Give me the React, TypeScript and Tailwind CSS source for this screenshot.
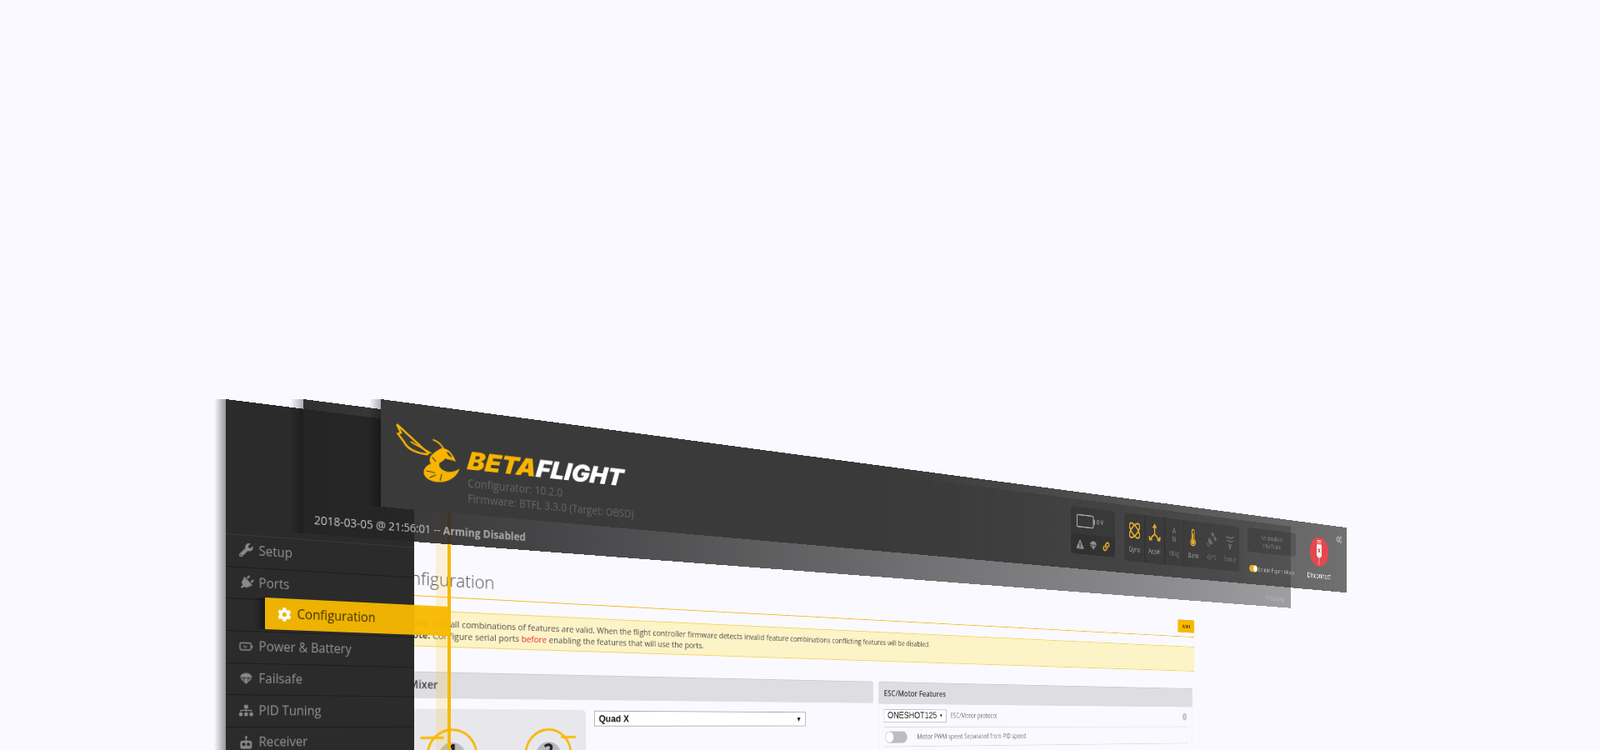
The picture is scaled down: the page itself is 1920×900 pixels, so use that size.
import React from "react";
import { FaWrench, FaPlug, FaCog, FaCogs, FaSitemap, FaExclamationTriangle, FaLink } from "react-icons/fa";

// -------------------------------------------------------
// ICONS
// -------------------------------------------------------

const BatteryIcon = ({ className }: { className?: string }) => (
  <svg viewBox="0 0 24 18" fill="none" stroke="currentColor" strokeWidth="2" className={className}>
    <rect x="1.5" y="3" width="19" height="12" rx="2.5" />
    <path d="M22.5 7v4" />
    <path d="M7 9.5l3-2v2h3.5l-3 2v-2z" strokeWidth="1" />
  </svg>
);

const ParachuteIcon = ({ className }: { className?: string }) => (
  <svg viewBox="0 0 24 24" fill="currentColor" className={className}>
    <path d="M1.5 10.5C2.5 5.5 7 3 12 3s9.5 2.5 10.5 7.5z" />
    <path d="M2 12l10 10L22 12h-4.500l-4 7 2-7h-7l2 7-4-7z" />
  </svg>
);

const ReceiverIcon = ({ className }: { className?: string }) => (
  <svg viewBox="0 0 24 24" fill="currentColor" className={className}>
    <rect x="11" y="2" width="2" height="8" />
    <circle cx="12" cy="3" r="2" />
    <path fillRule="evenodd" d="M6 9h12a4 4 0 0 1 4 4v6a4 4 0 0 1-4 4H6a4 4 0 0 1-4-4v-6a4 4 0 0 1 4-4zm2 3.500a3 3 0 1 0 0 6 3 3 0 0 0 0-6zm8 0a3 3 0 1 0 0 6 3 3 0 0 0 0-6z" />
  </svg>
);

const BeeLogo = () => (
  <svg viewBox="0 0 285 240" className="h-[80px] w-[95px] overflow-visible">
    {/* drawn as seen in the picture, so the layer's slope is taken back out first */}
    <g transform="matrix(1 -0.135 0 1 0 0)" fill="none" stroke="#f8b400" strokeLinejoin="miter">
      <path d="M138 124L19 14l15 31-11 3 22 30c14 28 50 44 90 48" strokeWidth="7" />
      <path d="M70 78l76 44" strokeWidth="5" />
      <path d="M152 72c18 6 32 18 42 36" strokeWidth="5" />
      <g fill="#f8b400" stroke="none">
        <path d="M186 104c26 0 44 24 54 52-14-8-28-6-40-14-6 10-26 20-44 22-16 0-22-22-8-36 10-10 24-18 38-24z" />
        <path d="M178 158c-34-6-60 10-60 34 2 24 40 42 78 36 28-4 50-22 58-46-18 10-40 16-58 6-14-8-24-18-18-30z" />
      </g>
      <path d="M205 118c8 2 16 12 20 22-10-4-18-10-20-22z" fill="#3a3a3a" stroke="none" />
      <path d="M128 186l32 8M140 212l24-10M180 224l6-24M150 136l14 18" stroke="#3a3a3a" strokeWidth="3.500" />
    </g>
  </svg>
);

const GyroIcon = () => (
  <svg viewBox="0 0 30 30" fill="none" stroke="currentColor" strokeWidth="2.600" className="h-[32px] w-[32px]">
    <ellipse cx="15" cy="15" rx="7" ry="15" transform="rotate(45 15 15)" />
    <ellipse cx="15" cy="15" rx="7" ry="15" transform="rotate(-45 15 15)" />
  </svg>
);

const AccelIcon = () => (
  <svg viewBox="0 0 30 30" fill="none" stroke="currentColor" strokeWidth="2.800" className="h-[32px] w-[32px]">
    <path d="M15 17V4M15 17L5 25M15 17l10 8" />
    <path d="M11 7l4-5 4 5M2 21l1 6 6-1M28 21l-1 6-6-1" />
  </svg>
);

const MagIcon = () => (
  <div className="flex h-[32px] w-[32px] flex-col items-center text-[14px] font-bold leading-[15px]">
    <span>A</span>
    <span>N</span>
  </div>
);

const BaroIcon = () => (
  <svg viewBox="0 0 30 30" fill="none" stroke="currentColor" strokeWidth="2" className="h-[32px] w-[32px]">
    <path d="M12 18V5a3 3 0 0 1 6 0v13a6 6 0 1 1-6 0z" />
    <circle cx="15" cy="23" r="3.500" fill="currentColor" />
    <path d="M15 23V9" />
  </svg>
);

const GpsIcon = () => (
  <svg viewBox="0 0 30 30" fill="currentColor" className="h-[32px] w-[32px]">
    <path d="M17 2l5 5-4 4-5-5zM24 9l4 5-4 4-5-5zM9 12l9 9-3 3c-4 1-8-1-9-5-1-3 1-5 3-7z" />
    <path d="M3 21c0 3 3 6 6 6" fill="none" stroke="currentColor" strokeWidth="2" />
  </svg>
);

const SonarIcon = () => (
  <svg viewBox="0 0 30 30" fill="none" stroke="currentColor" strokeWidth="2.400" className="h-[32px] w-[32px]">
    <path d="M5 6c3 4 17 4 20 0M7 13c3 3 13 3 16 0M10 20c2 2 8 2 10 0" />
    <circle cx="15" cy="25" r="1.800" fill="currentColor" />
  </svg>
);

const UsbIcon = () => (
  <svg viewBox="0 0 30 58" className="h-[52px] w-[28px]">
    <path d="M9 4h12v9H9z" fill="none" stroke="#fff" strokeWidth="2" />
    <path d="M12 7h2v2h-2zM16 7h2v2h-2z" fill="#fff" />
    <path d="M7 13h16v23c0 3-4 5-8 5s-8-2-8-5z" fill="#fff" />
    <path d="M11 21l8 9M19 21l-8 9" stroke="#e5474e" strokeWidth="2.400" />
    <path d="M15 41v16" stroke="#fff" strokeWidth="2.500" />
  </svg>
);

// -------------------------------------------------------
// DATA
// -------------------------------------------------------

const NAV_ITEMS = [
  { label: "Setup", icon: <FaWrench className="h-[17px] w-[17px]" /> },
  { label: "Ports", icon: <FaPlug className="h-[18px] w-[18px] rotate-45" /> },
  { label: "", icon: null },
  { label: "Power & Battery", icon: <BatteryIcon className="h-[16px] w-[17px]" /> },
  { label: "Failsafe", icon: <ParachuteIcon className="h-[17px] w-[17px]" /> },
  { label: "PID Tuning", icon: <FaSitemap className="h-[17px] w-[17px]" /> },
  { label: "Receiver", icon: <ReceiverIcon className="h-[18px] w-[17px]" /> },
];

const SENSORS = [
  { label: "Gyro", icon: <GyroIcon />, on: true },
  { label: "Accel", icon: <AccelIcon />, on: true },
  { label: "Mag", icon: <MagIcon />, on: false },
  { label: "Baro", icon: <BaroIcon />, on: true },
  { label: "GPS", icon: <GpsIcon />, on: false },
  { label: "Sonar", icon: <SonarIcon />, on: false },
];

// -------------------------------------------------------
// LAYERS
// -------------------------------------------------------

function ContentLayer() {
  return (
    <div className="absolute left-[420px] top-[161px] h-[600px] w-[1538px] origin-top-left text-[#444] [transform:matrix3d(1,0.07713,0,0.00033681,0,1,0,0,0,0,1,0,0,0,0,1)]">
      {/* title row */}
      <div className="flex h-[71px] items-end justify-between border-b border-[#f5b81c] pb-[5px] pl-[47px]">
        <h1 className="text-[22.500px] font-light leading-[32px] text-[#555]">Configuration</h1>
        <div className="mb-[2px] flex h-[23px] w-[45px] items-center justify-center rounded-[2px] bg-[#f8b800] text-[9px] font-bold text-[#6b4b00]">
          WIKI
        </div>
      </div>

      {/* note */}
      <div className="mt-[17px] h-[45px] border-y border-[#f3d35c] bg-[#fcf3c6] pl-[68px] pt-[6.500px] text-[11.500px] leading-[15.500px] text-[#4d4d4d]">
        <p>
          <b className="text-[#a33]">Note:</b> Not all combinations of features are valid. When the flight controller firmware detects invalid feature combinations conflicting features will be disabled.
        </p>
        <p>
          <b>Note:</b> Configure serial ports <span className="text-[#e8262a]">before</span> enabling the features that will use the ports.
        </p>
      </div>

      {/* panels */}
      <div className="mt-[31px] flex gap-[10px] pl-[58px] pr-[5px]">
        <div className="w-[738px] rounded-[4px]">
          <div className="flex h-[33px] items-center rounded-t-[4px] border-t border-[#ccc] bg-[#dedee2] pb-[2px] pl-[14px] text-[13.500px] font-semibold text-[#444]">
            Mixer
          </div>
          <div className="flex gap-[12px] pl-[14px] pt-[13px]">
            <div className="h-[300px] w-[241px] rounded-[6px] bg-[#e8e8ec]">
              <svg viewBox="0 0 241 300" fill="none" stroke="#f8b800" strokeWidth="3" className="h-[300px] w-[241px]">
                <path d="M15 36h30M205 36h21" />
                <circle cx="56" cy="58" r="32" />
                <circle cx="187" cy="58" r="32" />
                <circle cx="56" cy="60" r="18" fill="#b9b9bb" stroke="none" />
                <circle cx="187" cy="60" r="18" fill="#b9b9bb" stroke="none" />
                <text x="56" y="63" textAnchor="middle" fontSize="26" fontWeight="700" fill="#222" stroke="none">1</text>
                <text x="187" y="63" textAnchor="middle" fontSize="26" fontWeight="700" fill="#222" stroke="none">2</text>
              </svg>
            </div>
            <div className="mt-[1px] flex h-[21px] w-[345px] items-center justify-between border border-[#a9a9a9] bg-white pl-[6px] pr-[6px] font-['Liberation_Sans',sans-serif] text-[13px] font-bold text-[#111]">
              <span>Quad X</span>
              <span className="text-[10px]">▼</span>
            </div>
          </div>
        </div>

        <div className="w-[727px] rounded-[4px] border-x border-[#e6e6ea]">
          <div className="flex h-[34px] items-center rounded-t-[4px] border-t border-[#ccc] bg-[#dedee2] pl-[10px] text-[13px] font-semibold text-[#444]">
            ESC/Motor Features
          </div>
          <div className="mx-[10px] flex h-[36px] items-center border-b border-[#ddd] text-[11px] text-[#777]">
            <div className="flex h-[20px] w-[126px] items-center justify-between border border-[#bbb] bg-white pl-[6px] pr-[6px] font-['Liberation_Sans',sans-serif] text-[15px] text-[#222]">
              <span>ONESHOT125</span>
              <span className="text-[8px]">▼</span>
            </div>
            <span className="ml-[8px]">ESC/Motor protocol</span>
            <span className="ml-auto mr-[5px] flex h-[13px] w-[11px] items-center justify-center rounded-full bg-[#c4c4c4] text-[9px] font-bold text-white">?</span>
          </div>
          <div className="mx-[10px] flex h-[30px] items-center border-b border-[#ddd] text-[11px] text-[#777]">
            <div className="ml-[2px] flex h-[18px] w-[44px] items-center rounded-full bg-[#bdbdbd] pl-[1px]">
              <div className="h-[16px] w-[16px] rounded-full bg-white" />
            </div>
            <span className="ml-[20px]">Motor PWM speed Separated from PID speed</span>
          </div>
        </div>
      </div>
    </div>
  );
}

function SidebarLayer() {
  return (
    <div className="absolute left-[271px] top-0 h-[480px] w-[244px] origin-top-left bg-[#2b2b2c] pt-[161px] [transform:matrix3d(1,0.12508,0,0.00032072,0,1,0,0,0,0,1,0,0,0,0,1)]">
      <div className="border-t border-[#3a3a3a]">
        {NAV_ITEMS.map((item, i) => (
          <div key={i} className="flex h-[38.700px] items-center border-b border-[#1c1c1d] pb-[2px] pl-[16px] text-[15.600px] text-[#939393]">
            <span className="flex w-[24px] shrink-0 text-[#8a8a8a]">{item.icon}</span>
            <span>{item.label}</span>
          </div>
        ))}
      </div>
    </div>
  );
}

function StatusLayer() {
  return (
    <div className="absolute left-[364px] top-0 flex h-[161px] w-[1948px] origin-top-left items-end justify-between bg-linear-to-r from-[#242425f0] via-[#2a2a2ba8] to-[#2a2a2b70] pb-[7px] pl-[13px] pr-[22px] text-[14px] [transform:matrix3d(1,0.12893,0,0.00033058,0,1,0,0,0,0,1,0,0,0,0,1)]">
      <span className="text-[#c8c8c8]">
        2018-03-05 @ 21:56:01 -- <b className="text-[#a9a9a9]">Arming Disabled</b>
      </span>
      <span className="text-[13px] text-white/30">Show Log</span>
    </div>
  );
}

function HeaderLayer() {
  return (
    <div className="absolute left-[457px] top-0 flex h-[129px] w-[1917px] origin-top-left items-start bg-linear-to-r from-[#3a3a3a] via-[#3a3a3a] via-40% to-[#3a3a3ab8] pl-[13px] [transform:matrix3d(1,0.13302,0,0.00034106,0,1,0,0,0,0,1,0,0,0,0,1)]">
      <div className="mt-[24px] w-[95px] shrink-0">
        <BeeLogo />
      </div>

      <div className="w-[1046px] shrink-0 pt-[46px]">
        <div className="origin-left font-['Inter',sans-serif] text-[31px] font-black italic leading-[31px] [transform:scaleX(1.1)_skewX(-6deg)]">
          <span className="text-[#f8b400]">BETA</span>
          <span className="text-white">FLIGHT</span>
        </div>
        <div className="mt-[3px] text-[13.800px] leading-[19px] text-[#666]">
          <p>Configurator: 10.2.0</p>
          <p>Firmware: BTFL 3.3.0 (Target: OBSD)</p>
        </div>
      </div>

      {/* battery + status */}
      <div className="mt-[25px] h-[79px] w-[105px] shrink-0 overflow-hidden rounded-[5px] bg-black/15">
        <div className="flex h-[45px] items-center gap-[4px] pl-[13px] text-[11px] font-semibold text-[#a8a8a8]">
          <svg viewBox="0 0 44 24" fill="none" stroke="currentColor" strokeWidth="2" className="h-[24px] w-[44px]">
            <rect x="1" y="2" width="39" height="20" rx="3" />
            <path d="M42.500 8v8" strokeWidth="2.500" />
          </svg>
          <span>0 V</span>
        </div>
        <div className="flex h-[34px] items-center justify-between bg-black/10 px-[13px] text-[#8f8f8f]">
          <FaExclamationTriangle className="h-[17px] w-[17px]" />
          <ParachuteIcon className="h-[18px] w-[18px]" />
          <FaLink className="h-[16px] w-[16px] text-[#e2ae2c]" />
        </div>
      </div>

      {/* sensors */}
      <div className="ml-[24px] mt-[25px] flex h-[83px] w-[305px] shrink-0 overflow-hidden rounded-[5px] bg-black/15">
        {SENSORS.map((s) => (
          <div key={s.label} className={`flex w-[51px] flex-col items-center border-r border-black/25 pt-[13px] text-[13px] ${s.on ? "text-[#e2ae2c]" : "text-[#6c6c6c]"}`}>
            {s.icon}
            <span className={`mt-[7px] ${s.on ? "text-[#a2a2a2]" : "text-[#777]"}`}>{s.label}</span>
          </div>
        ))}
      </div>

      {/* dataflash + expert mode */}
      <div className="ml-[24px] mt-[24px] w-[143px] shrink-0">
        <div className="flex h-[45px] items-center justify-center rounded-[5px] bg-black/15 text-center text-[11px] leading-[14px] text-[#8c8c8c]">
          <p>
            No dataflash
            <br />
            chip found
          </p>
        </div>
        <div className="mt-[22px] flex items-center gap-[2px] pl-[5px] text-[11.500px] text-[#b5b5b5]">
          <div className="flex h-[13px] w-[24px] shrink-0 items-center justify-end rounded-full bg-[#e2ae2c] pr-[1px]">
            <div className="h-[11px] w-[11px] rounded-full bg-white" />
          </div>
          <span className="whitespace-nowrap">Enable Expert Mode</span>
        </div>
      </div>

      {/* disconnect */}
      <div className="ml-[33px] mt-[26px] flex w-[80px] shrink-0 flex-col items-center">
        <div className="flex h-[57px] w-[59px] items-center justify-center rounded-full bg-[#e5474e]">
          <UsbIcon />
        </div>
        <span className="mt-[7px] text-[14.500px] text-white">Disconnect</span>
      </div>

      <FaCogs className="ml-[13px] mt-[18px] h-[15px] w-[22px] shrink-0 text-[#aaa]" />
    </div>
  );
}

// -------------------------------------------------------
// MAIN COMPONENT
// -------------------------------------------------------

export default function App() {
  return (
    <div className="relative h-[900px] w-full overflow-hidden bg-[#f9f9ff] font-['Open_Sans',sans-serif]">
      {/* the exploded view is cut flat at its top edge, as the picture is */}
      <div className="absolute inset-x-0 bottom-0 top-[479px] overflow-hidden blur-[0.4px]">
        <ContentLayer />

        {/* guide line running through the layers */}
        <div className="absolute bottom-0 left-[523px] top-[121px] w-[14px] bg-[#ffbb00]/15" />
        <div className="absolute bottom-0 left-[537px] top-[121px] w-[4px] bg-[#f8b800]" />

        <div className="absolute bottom-0 left-[257px] top-0 w-[14px] bg-linear-to-l from-black/40 to-transparent" />
        <SidebarLayer />

        {/* floating active item */}
        <div className="absolute left-[305px] top-[238px] h-[38px] w-[13px] bg-linear-to-l from-black/40 to-transparent" />
        <div className="absolute left-[318px] top-[238px] flex h-[38px] w-[237px] origin-top-left items-center bg-[#f8b800]/95 pl-[15px] text-[15.600px] text-[#3b3000] [transform:matrix3d(1,0.0495,0,0.00032563,0,1,0,0,0,0,1,0,0,0,0,1)]">
          <FaCog className="mr-[7px] h-[17px] w-[17px] text-white" />
          Configuration
        </div>

        <div className="absolute left-[348px] top-0 h-[161px] w-[16px] bg-linear-to-l from-black/30 to-transparent" />
        <StatusLayer />

        <div className="absolute left-[443px] top-0 h-[129px] w-[14px] bg-linear-to-l from-black/30 to-transparent" />
        <HeaderLayer />
      </div>
    </div>
  );
}
